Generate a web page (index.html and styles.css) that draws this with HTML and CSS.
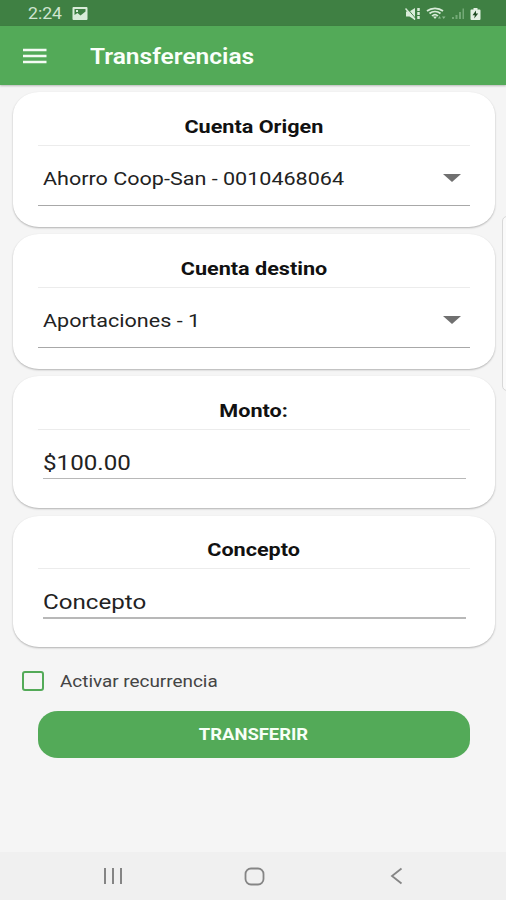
FILE: index.html
```html
<!DOCTYPE html>
<html lang="es">
<head>
    <meta charset="utf-8">
    <title>Transferencias</title>
    <link rel="stylesheet" href="styles.css">
</head>
<body>

<div class="status-bar">
    <span class="clock">2:24</span>
    <svg class="photo-icon" width="16" height="13" viewBox="0 0 16 13">
        <path fill="#d9ecd9" fill-rule="evenodd" d="M1.500 0h13a1 1 0 0 1 1 1v11a1 1 0 0 1-1 1h-13a1 1 0 0 1-1-1V1a1 1 0 0 1 1-1zM2.500 2v6l3-2 3 2.500 5-4V2zM4 3h2v2H4z"/>
    </svg>
    <div class="status-icons">
        <svg width="16" height="14" viewBox="0 0 16 14">
            <path fill="#d9ecd9" d="M1 4.500h3.500L10 1v12L4.500 9.500H1z"/>
            <path stroke="#3f8043" stroke-width="1" d="M1.500 .5l10 12"/>
            <path stroke="#d9ecd9" stroke-width="1.500" fill="none" d="M.5 1.500l9.500 11"/>
            <path stroke="#d9ecd9" stroke-width="2.500" stroke-dasharray="3 1" d="M13.500 1v12"/>
        </svg>
        <svg width="20" height="14" viewBox="0 0 20 14">
            <g fill="none" stroke="#d9ecd9" stroke-width="1.700">
                <path d="M1 4c4.500-3.600 11.500-3.600 16 0"/>
                <path d="M3.500 6.500c3.200-2.700 7.800-2.700 11 0"/>
                <path d="M6 9c1.800-1.700 4.200-1.700 6 0"/>
            </g>
            <path fill="#d9ecd9" d="M7 9.500h4L9 12z"/>
            <path fill="#8dbb90" d="M12 11.500l1.500-2.500 1.500 2.500zM16 9.500h3.500L17.700 12z"/>
        </svg>
        <svg width="14" height="14" viewBox="0 0 14 14">
            <path fill="#73a976" d="M1 10h2v2H1zM4.500 8h2v4h-2zM8 5h2v7H8zM11.500 1.500h1.500v10.500h-1.500z"/>
        </svg>
        <svg width="11" height="14" viewBox="0 0 11 14">
            <path fill="#e3f1e3" d="M3.500 1h4v1.500h2a1 1 0 0 1 1 1V12a1 1 0 0 1-1 1h-8a1 1 0 0 1-1-1V3.500a1 1 0 0 1 1-1h2z"/>
            <path fill="#1f4c23" d="M6 3.500L2.500 8.300h2.300l-.6 3.200 4-5H6z"/>
        </svg>
    </div>
</div>

<div class="app-bar">
    <svg width="24" height="16" viewBox="0 0 24 16">
        <path stroke="#f4fbf4" stroke-width="2.500" d="M0 2h23.500M0 8h23.500M0 14h23.500"/>
    </svg>
    <h1><span>Transferencias</span></h1>
</div>

<div class="content">
    <div class="card">
        <h2><span>Cuenta Origen</span></h2>
        <div class="select">
            <span class="value">Ahorro Coop-San - 0010468064</span>
            <svg width="18" height="8" viewBox="0 0 18 8"><path fill="#707070" d="M0 0h18L9 8z"/></svg>
        </div>
    </div>

    <div class="card">
        <h2><span>Cuenta destino</span></h2>
        <div class="select">
            <span class="value">Aportaciones - 1</span>
            <svg width="18" height="8" viewBox="0 0 18 8"><path fill="#707070" d="M0 0h18L9 8z"/></svg>
        </div>
    </div>

    <div class="card card-amount">
        <h2><span>Monto:</span></h2>
        <div class="input"><span class="value">$100.00</span></div>
    </div>

    <div class="card card-concept">
        <h2><span>Concepto</span></h2>
        <div class="input"><span class="value">Concepto</span></div>
    </div>

    <div class="recurrence">
        <span class="checkbox"></span>
        <span class="recurrence-label">Activar recurrencia</span>
    </div>

    <button class="transfer-button"><span>TRANSFERIR</span></button>
</div>

<div class="nav-bar">
    <svg width="20" height="18" viewBox="0 0 20 18">
        <path stroke="#858585" stroke-width="2" d="M2 1v16M10 1v16M18 1v16"/>
    </svg>
    <svg width="22" height="19" viewBox="0 0 22 19">
        <rect x="1.500" y="1.500" width="18" height="16" rx="5.500" fill="none" stroke="#858585" stroke-width="1.800"/>
    </svg>
    <svg width="13" height="18" viewBox="0 0 13 18">
        <path fill="none" stroke="#858585" stroke-width="1.800" d="M11.500 1.500L2 9l9.500 7.500"/>
    </svg>
</div>

<!-- scroll handle at the screen edge -->
<div class="edge-handle"></div>

</body>
</html>
```

FILE: styles.css
```css
body {
    display: flex;
    flex-direction: column;
    height: 900px;
    margin: 0;
    overflow: hidden;
    background: #f5f5f5;
    color: #222;
    font-family: Roboto, sans-serif;
}
svg {
    display: block;
    flex: none;
}
h1, h2 {
    margin: 0;
}

/* wide lettering */
.clock, h1 span, h2 span, .value, .recurrence-label, .transfer-button span {
    display: inline-block;
    white-space: nowrap;
    transform: scaleX(1.15);
    transform-origin: left center;
}
h2 span, .transfer-button span {
    transform-origin: center;
}

.status-bar {
    display: flex;
    align-items: center;
    box-sizing: border-box;
    height: 26px;
    padding: 1px 25px 0 28px;
    background: #3f8043;
}
.clock {
    width: 44px;
    color: #cfe5d0;
    font-size: 16.500px;
    line-height: 26px;
    transform: scaleX(1.07);
}
.status-icons {
    display: flex;
    gap: 5px;
    margin-left: auto;
}

.app-bar {
    display: flex;
    align-items: center;
    gap: 43px;
    height: 59px;
    padding: 0 23px;
    background: #53aa58;
    box-shadow: 0 1px 2px rgba(0,0,0,0.25);
}
h1 {
    padding-top: 2px;
    color: #fafffa;
    font-size: 22px;
    font-weight: 600;
}
h1 span {
    transform: scaleX(1.115);
}

.content {
    flex: 1;
    padding: 7px 11px 0 13px;
}
.card {
    box-sizing: border-box;
    height: 135px;
    margin-bottom: 7px;
    padding: 0 25px;
    background: #fff;
    border-radius: 26px / 23px;
    box-shadow: 0 1px 2px rgba(0,0,0,0.28);
}
.card h2 {
    height: 54px;
    box-sizing: border-box;
    border-bottom: 1px solid #ececec;
    color: #111;
    font-size: 18px;
    font-weight: 700;
    line-height: 70px;
    text-align: center;
}
.card h2 span {
    transform: scaleX(1.2);
}
.select {
    display: flex;
    align-items: center;
    justify-content: space-between;
    box-sizing: border-box;
    height: 60px;
    padding: 5px 9px 0 5px;
    border-bottom: 1px solid #a8a8a8;
    font-size: 19px;
    line-height: 53px;
}
.select .value {
    transform: scaleX(1.134);
}
.card-amount {
    height: 132px;
    margin-bottom: 8px;
}
.card-concept {
    height: 131px;
    margin-bottom: 0;
}
.card-concept h2 {
    height: 53px;
    line-height: 68px;
}
.input {
    height: 48px;
    margin: 0 4px 0 5px;
    border-bottom: 1px solid #b8b8b8;
    font-size: 21px;
    line-height: 66px;
}
.card-concept .input {
    border-bottom: 2px solid #b8b8b8;
}

.recurrence {
    display: flex;
    align-items: center;
    height: 20px;
    margin: 24px 0 0 9px;
}
.checkbox {
    box-sizing: border-box;
    width: 22px;
    height: 20px;
    border: 2px solid #53aa58;
    border-radius: 3px;
}
.recurrence-label {
    margin-left: 16px;
    font-size: 16px;
    color: #444;
    transform: scaleX(1.18);
}
.transfer-button {
    display: block;
    width: 432px;
    height: 47px;
    margin: 20px 0 0 25px;
    padding: 0;
    background: #53aa58;
    border: none;
    border-radius: 20px / 18px;
    color: #f7fff7;
    font-family: inherit;
    font-size: 16px;
    font-weight: 700;
}

.nav-bar {
    display: flex;
    align-items: center;
    justify-content: space-between;
    box-sizing: border-box;
    height: 48px;
    padding: 0 103px 0 103px;
    background: #f0f0f0;
}
.nav-bar svg:nth-child(2) {
    margin-right: 3px;
}

.edge-handle {
    position: absolute;
    top: 216px;
    left: 502px;
    width: 8px;
    height: 173px;
    background: #fafafa;
    border: 1px solid #d8d8d8;
    border-radius: 5px;
}
```
